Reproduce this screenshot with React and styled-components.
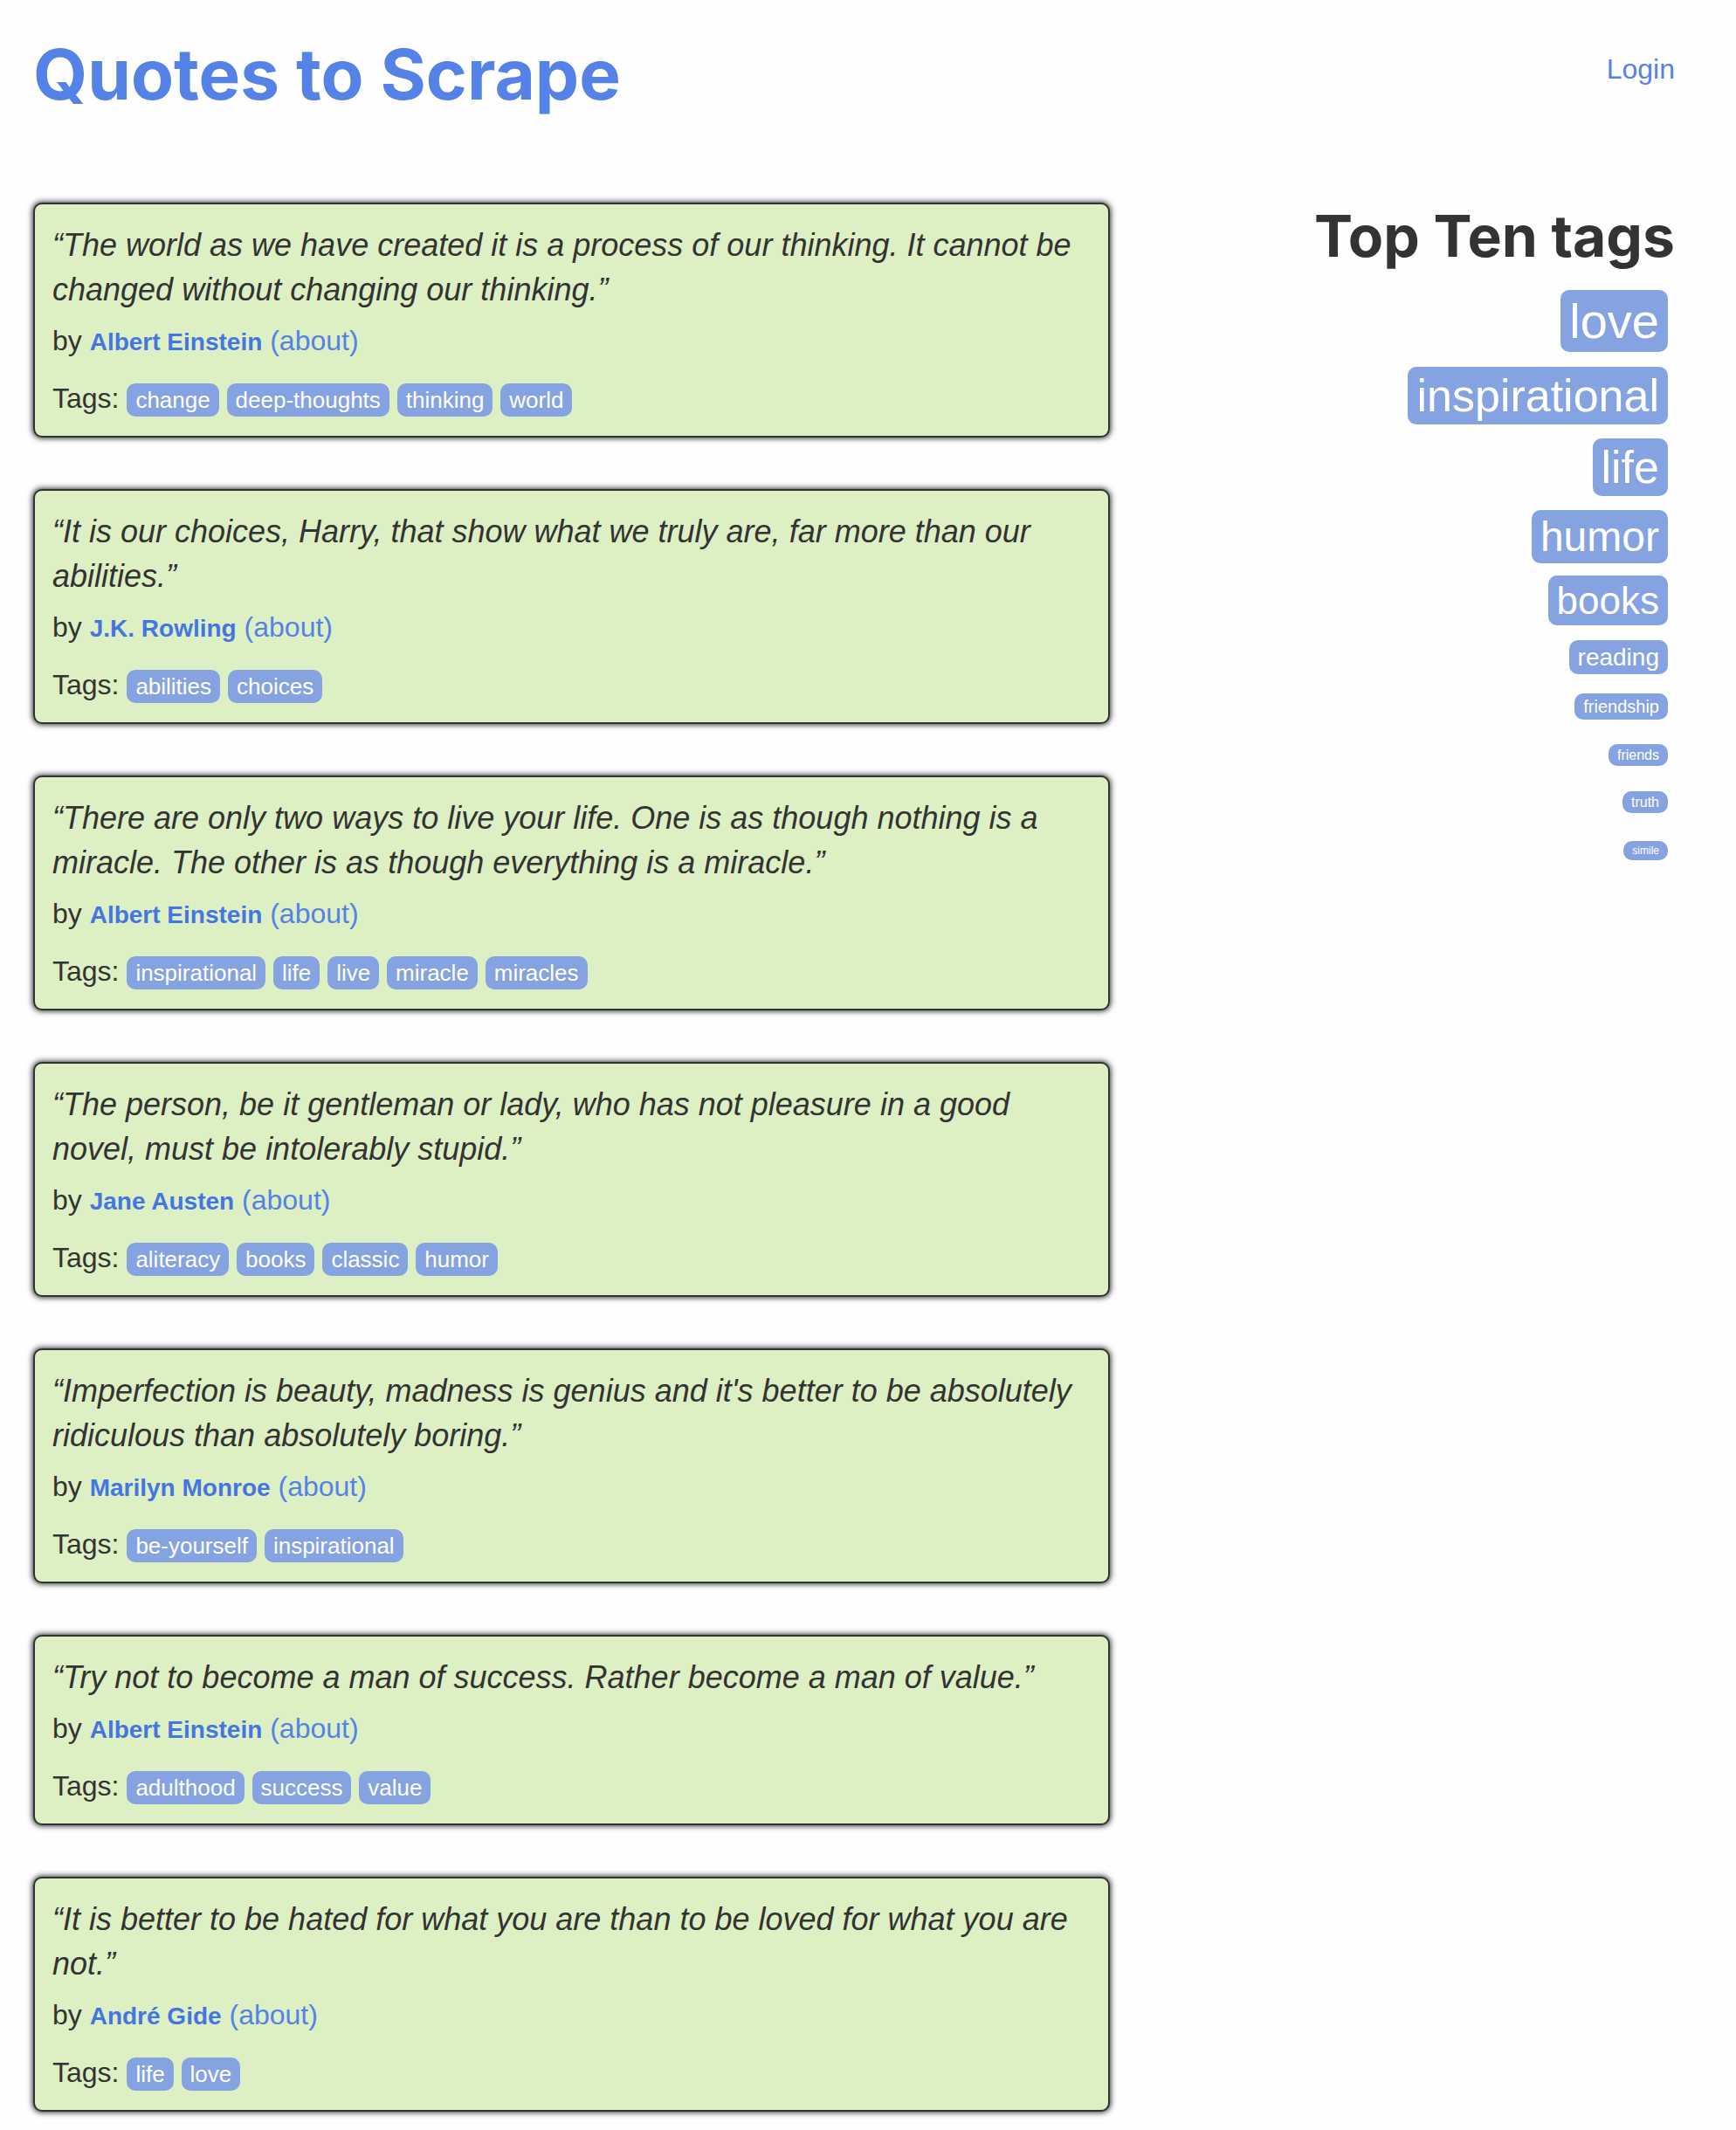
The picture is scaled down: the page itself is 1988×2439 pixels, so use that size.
import React from "react";
import styled, { createGlobalStyle } from "styled-components";

const GlobalStyle = createGlobalStyle`
  *, *::before, *::after { box-sizing: border-box; }
  body {
    margin: 0;
    background: #fefefe;
    color: #333;
    font-family: "Liberation Sans", Arial, sans-serif;
    font-size: 32px;
    line-height: 46px;
  }
`;

const Page = styled.div`
  padding: 40px 70px 20px 38px;
`;

const Columns = styled.div`
  display: grid;
  grid-template-columns: repeat(12, minmax(0, 1fr));
  column-gap: 60px;
`;

const Header = styled(Columns).attrs({ as: "header" })`
  align-items: start;
  margin-bottom: 102px;
`;

const Main = styled.main`
  grid-column: span 8;
  display: flex;
  flex-direction: column;
  gap: 59px;
`;

const Title = styled.h1`
  grid-column: span 8;
  margin: 0;
  font-family: Inter, sans-serif;
  font-size: 80px;
  font-weight: 700;
  line-height: 90px;
`;

const Link = styled.a`
  color: #5582e6;
  text-decoration: none;
`;

const Nav = styled.nav`
  grid-column: span 4;
  padding-top: 16px;
  text-align: right;
`;

const Card = styled.article`
  padding: 21px 20px 20px;
  border: 2px solid #333;
  border-radius: 10px;
  background: #ddf0c4;
  box-shadow: 0 0 6px 1px #333;
`;

const QuoteText = styled.p`
  margin: 0 0 10px;
  font-size: 36px;
  font-style: italic;
  line-height: 51px;
`;

const Byline = styled.p`
  margin: 0 0 20px;
`;

const Author = styled.small`
  color: #4575e2;
  font-size: 28px;
  font-weight: 700;
  line-height: 1;
`;

const Tags = styled.div``;

const Tag = styled.a`
  padding: 4px 10px;
  border-radius: 10px;
  background: #86a3e1;
  color: #fff;
  font-size: ${(p) => p.$size || 26}px;
  line-height: ${(p) => (p.$size ? 1.43 : 1)};
  text-decoration: none;
`;

const Sidebar = styled.aside`
  grid-column: span 4;
  text-align: right;
`;

const SidebarTitle = styled.h2`
  margin: 0 0 20px;
  font-family: Inter, sans-serif;
  font-size: 66px;
  font-weight: 700;
  line-height: 76px;
`;

const TagCloud = styled.ul`
  margin: 0;
  padding: 0 8px 0 0;
  list-style: none;
`;

const TagCloudItem = styled.li`
  margin-bottom: 8px;
`;

const quotes = [
  {
    text: "“The world as we have created it is a process of our thinking. It cannot be changed without changing our thinking.”",
    author: "Albert Einstein",
    tags: ["change", "deep-thoughts", "thinking", "world"],
  },
  {
    text: "“It is our choices, Harry, that show what we truly are, far more than our abilities.”",
    author: "J.K. Rowling",
    tags: ["abilities", "choices"],
  },
  {
    text: "“There are only two ways to live your life. One is as though nothing is a miracle. The other is as though everything is a miracle.”",
    author: "Albert Einstein",
    tags: ["inspirational", "life", "live", "miracle", "miracles"],
  },
  {
    text: "“The person, be it gentleman or lady, who has not pleasure in a good novel, must be intolerably stupid.”",
    author: "Jane Austen",
    tags: ["aliteracy", "books", "classic", "humor"],
  },
  {
    text: "“Imperfection is beauty, madness is genius and it's better to be absolutely ridiculous than absolutely boring.”",
    author: "Marilyn Monroe",
    tags: ["be-yourself", "inspirational"],
  },
  {
    text: "“Try not to become a man of success. Rather become a man of value.”",
    author: "Albert Einstein",
    tags: ["adulthood", "success", "value"],
  },
  {
    text: "“It is better to be hated for what you are than to be loved for what you are not.”",
    author: "André Gide",
    tags: ["life", "love"],
  },
];

const topTags = [
  { name: "love", size: 56 },
  { name: "inspirational", size: 52 },
  { name: "life", size: 52 },
  { name: "humor", size: 48 },
  { name: "books", size: 44 },
  { name: "reading", size: 28 },
  { name: "friendship", size: 20 },
  { name: "friends", size: 16 },
  { name: "truth", size: 16 },
  { name: "simile", size: 12 },
];

function Quote({ text, author, tags }) {
  return (
    <Card>
      <QuoteText>{text}</QuoteText>
      <Byline>
        by <Author>{author}</Author> <Link href="#about">(about)</Link>
      </Byline>
      <Tags>
        Tags:
        {tags.map((tag) => (
          <React.Fragment key={tag}>
            {" "}
            <Tag href={`#${tag}`}>{tag}</Tag>
          </React.Fragment>
        ))}
      </Tags>
    </Card>
  );
}

export default function App() {
  return (
    <>
      <GlobalStyle />
      <Page>
        <Header>
          <Title>
            <Link href="#home">Quotes to Scrape</Link>
          </Title>
          <Nav>
            <Link href="#login">Login</Link>
          </Nav>
        </Header>
        <Columns>
          <Main>
            {quotes.map((quote) => (
              <Quote key={quote.text} {...quote} />
            ))}
          </Main>
          <Sidebar>
            <SidebarTitle>Top Ten tags</SidebarTitle>
            <TagCloud>
              {topTags.map(({ name, size }) => (
                <TagCloudItem key={name}>
                  <Tag href={`#${name}`} $size={size}>
                    {name}
                  </Tag>
                </TagCloudItem>
              ))}
            </TagCloud>
          </Sidebar>
        </Columns>
      </Page>
    </>
  );
}
